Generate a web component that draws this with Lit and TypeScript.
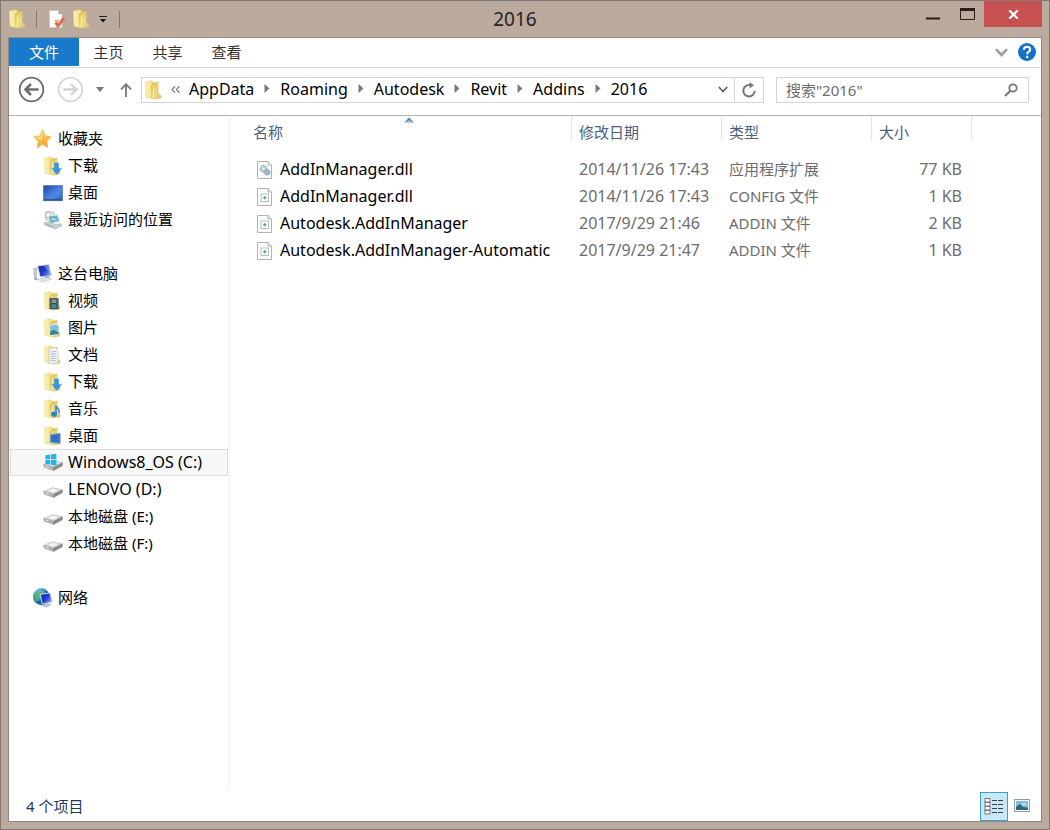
import { LitElement, html, svg, css } from "lit";
import { customElement, property } from "lit/decorators.js";
import { classMap } from "lit/directives/class-map.js";

interface Place {
  label: string;
  icon: string;
  root?: boolean;
  latin?: boolean;
  selected?: boolean;
}

interface FileRow {
  name: string;
  icon: string;
  date: string;
  type: string;
  size: string;
}

const places: Place[][] = [
  [
    { label: "收藏夹", icon: "star", root: true },
    { label: "下载", icon: "folder-down" },
    { label: "桌面", icon: "desktop" },
    { label: "最近访问的位置", icon: "recent" },
  ],
  [
    { label: "这台电脑", icon: "computer", root: true },
    { label: "视频", icon: "folder-video" },
    { label: "图片", icon: "folder-picture" },
    { label: "文档", icon: "folder-doc" },
    { label: "下载", icon: "folder-down" },
    { label: "音乐", icon: "folder-music" },
    { label: "桌面", icon: "folder-desktop" },
    { label: "Windows8_OS (C:)", icon: "disk-os", latin: true, selected: true },
    { label: "LENOVO (D:)", icon: "disk", latin: true },
    { label: "本地磁盘 (E:)", icon: "disk" },
    { label: "本地磁盘 (F:)", icon: "disk" },
  ],
  [{ label: "网络", icon: "network", root: true }],
];

const files: FileRow[] = [
  { name: "AddInManager.dll", icon: "file-dll", date: "2014/11/26 17:43", type: "应用程序扩展", size: "77 KB" },
  { name: "AddInManager.dll", icon: "file", date: "2014/11/26 17:43", type: "CONFIG 文件", size: "1 KB" },
  { name: "Autodesk.AddInManager", icon: "file", date: "2017/9/29 21:46", type: "ADDIN 文件", size: "2 KB" },
  { name: "Autodesk.AddInManager-Automatic", icon: "file", date: "2017/9/29 21:47", type: "ADDIN 文件", size: "1 KB" },
];

const crumbs = ["AppData", "Roaming", "Autodesk", "Revit", "Addins", "2016"];

/* Open folder standing on its edge; shared by every folder variant. */
const folder = svg`
  <path d="M1.4 2 7.4.8l2.8 1.6V19L2 17.4Z" fill="url(#fa)" stroke="#e6d07c" stroke-width=".5"/>
  <path d="M7.2 6 9.6 3l4.6-1v11.2l2.8 2.4v2.4L10 19.2 7.8 17Z" fill="url(#fb)" stroke="#d3b553" stroke-width=".4"/>
  <path d="M9.4 5.4v12.8" stroke="#fdf6c6" stroke-width="1"/>`;

/* Flat external drive in perspective. */
const drive = svg`
  <path d="M.6 11.4 9.4 7.6 19.4 9.8 10.6 14.2Z" fill="#dedede" stroke="#b4b4b4" stroke-width=".5"/>
  <path d="M.6 11.4 10.6 14.2v3.4L1.2 14.2Z" fill="#b4b4b4" stroke="#8f8f8f" stroke-width=".4"/>
  <path d="M10.6 14.2 19.4 9.8v3L10.6 17.6Z" fill="#868987" stroke="#7a7a7a" stroke-width=".4"/>
  <path d="M6 10.8l4-1.8 4.6 1-4.2 2Z" fill="#fafafa"/>
  <path d="M2.6 13.1l3 1" stroke="#f2f2f2" stroke-width=".8"/>`;

const page = svg`
  <path d="M2.5 1.5h10.6l3.4 3.4v13.6h-14Z" fill="#fdfdfd" stroke="#b0b3b1"/>
  <path d="M13 1.5V5h3.5" fill="#e9ecea" stroke="#b0b3b1"/>`;

const art: Record<string, unknown> = {
  folder,
  star: svg`<path d="M9.4.4 12 6.6l6.4 1.2-4.6 4.4 1 6.4-5.2-3.4L4.2 19l1-6.6L.8 7.4l6.2-.6Z" fill="url(#st)" stroke="#eda63a" stroke-width=".5"/>
    <path d="M9.2 3 7.8 7.8l-4 .6L9 11Z" fill="#fff0ae" opacity=".8"/>`,
  "folder-down": svg`${folder}<path d="M11.4 7h4.2v5.4h3L13.8 18.4 9 12.4h2.4Z" fill="#3397dc" stroke="#2b86c8" stroke-width=".4"/>`,
  "folder-video": svg`${folder}<rect x="6.4" y="7.2" width="9.2" height="11" fill="#37484c"/>
    <path d="M7.2 8.2v9.4M14.8 8.2v9.4" stroke="#a9bcbc" stroke-width=".8" stroke-dasharray="1 1"/>
    <rect x="8.6" y="8.4" width="4.8" height="3.6" fill="#7b9ea5"/><rect x="8.6" y="13.2" width="4.8" height="4" fill="#3f8f92"/>`,
  "folder-picture": svg`${folder}<path d="M6.8 7.6l6-1.4 3.2 1.8v8.4L6.8 17.4Z" fill="#7fbbe4" stroke="#eef6fb" stroke-width=".8"/>
    <path d="M7.2 17v-3.4l3.6-1.8 5 3v1.2Z" fill="#3d827d"/>`,
  "folder-doc": svg`${folder}<path d="M6 3.6 12.6 2.6l2.4 2.4v13L6 19Z" fill="#f2f5fa" stroke="#b4bcc8" stroke-width=".6"/>
    <path d="M7.6 7l5.6-.6M7.6 9.2l5.6-.5M7.6 11.4l5.6-.4M7.6 13.6l5.6-.3M7.6 15.8l5.6-.2" stroke="#9dabbd" stroke-width=".8"/>`,
  "folder-music": svg`${folder}<ellipse cx="11" cy="15.2" rx="2.8" ry="2.6" fill="#2b7fd0"/>
    <path d="M13 15.2V6.6c.4 2.4 4 3 3.2 7.6" fill="none" stroke="#3c8cd8" stroke-width="1.7"/>`,
  "folder-desktop": svg`${folder}<path d="M7.4 8.8l9.8-1.6v10.2L7.4 16.4Z" fill="#356fc2" stroke="#7ea6de" stroke-width=".8"/>`,
  desktop: svg`<rect x=".7" y="2.7" width="18.6" height="15" fill="url(#dk)" stroke="#3a68a8" stroke-width=".8"/>
    <path d="M1.2 16.8h17.6" stroke="#2b4878" stroke-width="1"/>`,
  recent: svg`<rect x="2.2" y="1.4" width="9.4" height="9" rx="2.4" fill="#dce2e4" stroke="#b0bcc1" stroke-width=".7"/>
    <circle cx="5.2" cy="5" r="2.8" fill="#f2f6f7" stroke="#a4b2b8" stroke-width=".8"/>
    <path d="M5 6.2 14.4 4.8l2.4 6.8-9.6 1.8Z" fill="#6cb1c6" stroke="#e2ebed" stroke-width="1"/>
    <path d="M8.6 9.4l3-.6 1.6 2" fill="none" stroke="#e4f4f8" stroke-width="1"/>
    <path d="M1 12.6 6 12l6 2.4 5.8-.6.8 2.2-6.4 3-10.4-4Z" fill="#ccd3d6" stroke="#9ba8ae" stroke-width=".6"/>
    <path d="M3 14l8 3" stroke="#8c9ba2" stroke-width=".7"/>`,
  computer: svg`<path d="M.8 4.4l3-.6v10.8L1.4 14Z" fill="#c6ced4" stroke="#93a0a9" stroke-width=".5"/>
    <path d="M4.6 2 15.6.6l3 11L7.2 13Z" fill="url(#scr)" stroke="#d2d8e2" stroke-width=".9"/>
    <path d="M11 1.6l4.2-.4 2.2 8.8Z" fill="#8fa8f0" opacity=".6"/>
    <path d="M11.6 12.6l4-.6.8 2-4.6 1Z" fill="#9aa4ae"/>
    <path d="M4.6 15.2 14.6 13.4l4.4 1.6-9.6 3.2Z" fill="#dfe4e8" stroke="#a9b2ba" stroke-width=".5"/>
    <path d="M2 13.4l2.4 1.2-.8 1.8-2.6-1Z" fill="#9ba5ac"/>`,
  "disk-os": svg`${drive}<path d="M2.4 2.2 7 1.6v4.6H2.4ZM7.8 1.5 13.4.8v5.4H7.8ZM2.4 7H7v4.6L2.4 11ZM7.8 7h5.6v5.4l-5.6-.7Z" fill="#1fb3ea"/>`,
  disk: drive,
  network: svg`<circle cx="8.4" cy="8.8" r="8.2" fill="url(#gl)" stroke="#4e90c0" stroke-width=".5"/>
    <path d="M3 4.6C6 2 9.4 3 9 5.6S5 8.6 5.6 11 4 14.6 2.2 12.4C.8 9.4 1 6.6 3 4.6Z" fill="#54b15b" opacity=".85"/>
    <path d="M7.4 6.4 17 5l2.2 9-10 1.8Z" fill="url(#scr)" stroke="#d3daee" stroke-width=".9"/>
    <path d="M12 15.4l3.4-.6.6 1.6 2.4.4-5.4 2.4-3.6-1.4 2.6-.8Z" fill="#c3cada" stroke="#96a0b8" stroke-width=".5"/>`,
  "file-dll": svg`${page}<circle cx="8.6" cy="8.8" r="3.4" fill="#b9d2df" stroke="#8fb0c2" stroke-width="1.2" stroke-dasharray="1.6 .8"/>
    <circle cx="12.2" cy="12.4" r="2.6" fill="#9dbdcb" stroke="#7ba1b4" stroke-width="1.2" stroke-dasharray="1.4 .7"/>
    <circle cx="8.6" cy="8.8" r="1" fill="#fff"/>`,
  file: svg`${page}<rect x="6" y="7" width="7.5" height="7.5" fill="#fff" stroke="#b0c1b6"/>
    <path d="M8 10.8h3.6M9.8 9v3.6" stroke="#4f9569" stroke-width="1.1"/>`,
};

const defs = svg`<defs>
  <linearGradient id="fa" x2="1"><stop stop-color="#fbf2b8"/><stop offset="1" stop-color="#f1da7c"/></linearGradient>
  <linearGradient id="fb" x2="1" y2="1"><stop stop-color="#d4b236"/><stop offset=".5" stop-color="#f0dc80"/><stop offset="1" stop-color="#d6c084"/></linearGradient>
  <linearGradient id="st" y2="1" x2=".3"><stop stop-color="#ffe272"/><stop offset="1" stop-color="#f5a52f"/></linearGradient>
  <linearGradient id="dk" x2="1" y2="1"><stop stop-color="#1d47a6"/><stop offset=".6" stop-color="#4f8ae4"/><stop offset="1" stop-color="#2c5fc0"/></linearGradient>
  <linearGradient id="scr" x2="1" y2=".6"><stop stop-color="#0c1fa0"/><stop offset=".6" stop-color="#2440cc"/><stop offset="1" stop-color="#7f9af0"/></linearGradient>
  <radialGradient id="gl" cx=".35" cy=".3"><stop stop-color="#c5ecf5"/><stop offset=".6" stop-color="#3c9fd2"/><stop offset="1" stop-color="#1b5f9f"/></radialGradient>
</defs>`;

@customElement("shell-icon")
class ShellIcon extends LitElement {
  static styles = css`
    :host { display: block; flex: none; width: 20px; height: 20px; }
    .art { display: block; width: 100%; height: 100%; }
  `;
  @property() name = "folder";
  render() {
    return html`<svg class="art" viewBox="0 0 20 20" aria-hidden="true">${defs}${art[this.name]}</svg>`;
  }
}

@customElement("app-root")
class AppRoot extends LitElement {
  static styles = css`
    :host {
      display: block;
      font-family: "Noto Sans", "Noto Sans CJK SC", sans-serif;
      font-size: 15px;
      line-height: 27px;
      color: #000;
    }
    * { box-sizing: border-box; }
    button, input { font: inherit; color: inherit; margin: 0; padding: 0; border: 0; background: none; }
    button { display: flex; align-items: center; justify-content: center; }
    a { color: inherit; text-decoration: none; }
    svg { display: block; flex: none; }

    .window {
      display: flex;
      flex-direction: column;
      min-height: 100vh;
      padding: 0 7px 7px;
      background: #bbaa9e;
      border: 1px solid #857a72;
    }
    .titlebar {
      display: grid;
      grid-template-columns: 1fr auto 1fr;
      height: 36px;
    }
    .quick { display: flex; align-items: center; }
    .quick .sep { width: 1px; height: 17px; background: #85786f; }
    .quick .first { margin: 0 10px 0 8px; }
    .quick .last { margin-left: 7px; }
    .quick .more { width: 18px; height: 20px; margin-left: 2px; }
    .quick .folder { margin-left: 5px; }
    .title {
      margin: 0;
      padding-right: 20px;
      font-size: 19px;
      line-height: 36px;
      font-weight: 400;
      color: #2b221d;
    }
    .controls { display: flex; justify-content: flex-end; align-items: flex-start; }
    .controls .ctl { width: 34px; height: 26px; }
    .controls .close { width: 58px; background: #c75050; }

    .frame {
      flex: 1;
      display: flex;
      flex-direction: column;
      background: #fff;
      border: 1px solid #96887d;
    }
    .ribbon {
      display: flex;
      align-items: stretch;
      height: 30px;
      border-bottom: 1px solid #dadbdc;
      color: #333;
    }
    .ribbon .tab { width: 59px; height: 29px; white-space: nowrap; }
    .ribbon .file { width: 70px; height: 28px; background: #1979ca; color: #fff; }
    .ribbon .tabs { display: flex; flex: 1; }
    .ribbon .fold { width: 24px; }
    .ribbon .help { width: 28px; height: 28px; }

    .bar { display: flex; align-items: center; height: 48px; padding: 0 12px 4px 9px; border-bottom: 1px solid #b3b3b3; }
    .bar .round { width: 27px; height: 27px; }
    .bar .fwd { margin-left: 12px; }
    .bar .hist { width: 22px; height: 27px; margin-left: 5px; }
    .bar .up { width: 20px; height: 27px; margin: 0 5px; }
    .address { flex: 1; display: flex; align-items: center; height: 26px; border: 1px solid #d5d5d5; }
    .address .lead { margin-left: 2px; }
    .address .prev { width: 25px; padding-right: 2px; }
    .address .crumbs { flex: 1; display: flex; align-items: center; margin: 0; padding: 0 0 2px; list-style: none; font-size: 16px; line-height: 24px; }
    .address .crumb { display: flex; align-items: center; }
    .address .arrow { width: 26px; }
    .address .drop { width: 22px; height: 24px; }
    .address .refresh { width: 29px; height: 24px; border-left: 1px solid #d5d5d5; }
    .search { display: flex; align-items: center; width: 253px; height: 26px; margin-left: 12px; border: 1px solid #d5d5d5; }
    .search .field { flex: 1; min-width: 0; height: 24px; padding-left: 9px; line-height: 24px; outline: none; }
    .search .field::placeholder { color: #6d6d6d; opacity: 1; }
    .search .go { width: 34px; height: 24px; }

    .body { flex: 1; display: flex; }
    .side { width: 221px; flex: none; padding: 9px 1px 0; border-right: 1px solid #f3f3f3; }
    .group { margin: 0 0 27px; padding: 0; list-style: none; }
    .place { display: flex; align-items: center; gap: 5px; height: 27px; padding-left: 32px; border: 1px solid transparent; line-height: 25px; white-space: nowrap; }
    .place.root { padding-left: 22px; }
    .place.latin { font-size: 16px; }
    .place.selected { background: #f7f7f7; border-color: #dedede; }

    .main { flex: 1; min-width: 0; padding-left: 16px; }
    .files { table-layout: fixed; width: 726px; border-collapse: separate; border-spacing: 0; }
    .files .c-name { width: 326px; }
    .files .c-mid { width: 150px; }
    .files .c-size { width: 100px; }
    .files .head { position: relative; height: 40px; padding: 0; text-align: left; vertical-align: top; font-weight: 400; color: #4c607a; }
    .files .label { display: block; height: 25px; padding: 3px 7px 0; border-right: 1px solid #e5e5e5; }
    .files .sort { position: absolute; top: 1px; left: 50%; margin-left: -5px; }
    .files .cell { height: 27px; padding: 0 10px 0 7px; color: #6d6d6d; white-space: nowrap; }
    .files .latin { font-size: 16px; }
    .files .num { text-align: right; }
    .files .name { display: flex; align-items: center; gap: 5px; padding-left: 9px; color: #000; }

    .status { display: flex; align-items: center; height: 30px; padding: 0 6px 0 17px; color: #1e395b; }
    .status .count { flex: 1; }
    .status .view { width: 27px; height: 29px; padding-bottom: 2px; }
    .status .on { width: 28px; padding-bottom: 0; background: #c9e9f8; border: 1px solid #3c9fcb; }
  `;

  private arrow() {
    return html`<svg width="6" height="9" viewBox="0 0 6 9" aria-hidden="true"><path d="M.5 0 5.5 4.5.5 9Z" fill="#7a7a7a"/></svg>`;
  }

  private place(p: Place) {
    return html`<li>
      <a href="#" class=${classMap({ place: true, root: !!p.root, latin: !!p.latin, selected: !!p.selected })}>
        <shell-icon name=${p.icon}></shell-icon><span>${p.label}</span>
      </a>
    </li>`;
  }

  render() {
    return html`
      <div class="window">
        <header class="titlebar">
          <div class="quick">
            <shell-icon name="folder"></shell-icon>
            <span class="sep first"></span>
            <button aria-label="属性">
              <svg width="20" height="20" viewBox="0 0 20 20">
                <path d="M2.5 1.5h9l3.5 3.5v13.5H2.5Z" fill="#fff" stroke="#c9c5c2" stroke-width=".7"/>
                <path d="M11.5 1.5V5H15Z" fill="#9a9da0"/>
                <path d="M8.6 13.4 11 17 17 9" fill="none" stroke="#e2694c" stroke-width="3"/>
                <path d="M8 12l3.6-.4M11 18l-2-.4" stroke="#f0a08a" stroke-width="1.8"/>
              </svg>
            </button>
            <button class="folder" aria-label="新建文件夹"><shell-icon name="folder"></shell-icon></button>
            <button class="more" aria-label="自定义快速访问工具栏">
              <svg width="8" height="7" viewBox="0 0 8 7"><path d="M0 .5h8" stroke="#222"/><path d="M1 3h6L4 6.4Z" fill="#111"/></svg>
            </button>
            <span class="sep last"></span>
          </div>
          <h1 class="title">2016</h1>
          <div class="controls">
            <button class="ctl" aria-label="最小化">
              <svg width="14" height="12" viewBox="0 0 14 12"><path d="M0 10.5h14" stroke="#2c1c14" stroke-width="2"/></svg>
            </button>
            <button class="ctl" aria-label="最大化">
              <svg width="15" height="12" viewBox="0 0 15 12"><path d="M.5 1v10.5h14V1" fill="none" stroke="#2c1c14"/><path d="M0 1.5h15" stroke="#2c1c14" stroke-width="3"/></svg>
            </button>
            <button class="ctl close" aria-label="关闭">
              <svg width="11" height="9" viewBox="0 0 11 9"><path d="M1.2.3 9.8 8.7M9.8.3 1.2 8.7" stroke="#fff" stroke-width="2.2"/></svg>
            </button>
          </div>
        </header>

        <div class="frame">
          <nav class="ribbon">
            <button class="tab file">文件</button>
            <div class="tabs">
              <button class="tab">主页</button>
              <button class="tab">共享</button>
              <button class="tab">查看</button>
            </div>
            <button class="fold" aria-label="展开功能区">
              <svg width="13" height="9" viewBox="0 0 13 9"><path d="M1 1.2 6.5 7 12 1.2" fill="none" stroke="#a0a0a0" stroke-width="2.6"/></svg>
            </button>
            <button class="help" aria-label="帮助">
              <svg width="18" height="18" viewBox="0 0 18 18">
                <circle cx="9" cy="9" r="9" fill="#1473c8"/>
                <path d="M6 6.8c0-4 6.2-3.8 6.2-.4 0 2.4-3 2.2-3 4.8" fill="none" stroke="#fff" stroke-width="2.1"/>
                <rect x="8" y="12.8" width="2.3" height="2.3" fill="#fff"/>
              </svg>
            </button>
          </nav>

          <div class="bar">
            <button class="round" aria-label="返回">
              <svg width="27" height="27" viewBox="0 0 27 27" fill="none" stroke="#6c6c6c"><circle cx="13.5" cy="13.5" r="11.8" stroke-width="1.8"/><path d="M20.5 13.5H8M13 8l-5.5 5.5L13 19" stroke-width="2.6"/></svg>
            </button>
            <button class="round fwd" aria-label="前进">
              <svg width="27" height="27" viewBox="0 0 27 27" fill="none" stroke="#d3d3d3"><circle cx="13.5" cy="13.5" r="11.8" stroke-width="1.6"/><path d="M6.5 13.5H19M14 8l5.5 5.5L14 19" stroke-width="2.4"/></svg>
            </button>
            <button class="hist" aria-label="最近浏览的位置">
              <svg width="8" height="5" viewBox="0 0 8 5"><path d="M0 0h8L4 5Z" fill="#777"/></svg>
            </button>
            <button class="up" aria-label="上移">
              <svg width="12" height="14" viewBox="0 0 12 14" fill="none" stroke="#777" stroke-width="1.8"><path d="M6 14V1.4M1 6.4l5-5.2 5 5.2"/></svg>
            </button>
            <div class="address">
              <shell-icon class="lead" name="folder"></shell-icon>
              <button class="prev" aria-label="上级文件夹">
                <svg width="9" height="7" viewBox="0 0 9 7" fill="none" stroke="#777" stroke-width="1.2"><path d="M4 .4 1 3.5l3 3.1M8.4.4l-3 3.1 3 3.1"/></svg>
              </button>
              <ol class="crumbs">
                ${crumbs.map(
                  (c, i) => html`<li class="crumb">
                    <a href="#">${c}</a>
                    ${i < crumbs.length - 1 ? html`<button class="arrow" aria-label="展开 ${c}">${this.arrow()}</button>` : ""}
                  </li>`
                )}
              </ol>
              <button class="drop" aria-label="历史地址">
                <svg width="10" height="7" viewBox="0 0 10 7"><path d="M.8 1 5 5.4 9.2 1" fill="none" stroke="#666" stroke-width="1.7"/></svg>
              </button>
              <button class="refresh" aria-label="刷新">
                <svg width="16" height="16" viewBox="0 0 16 16"><path d="M9.5 3H8a5.7 5.7 0 1 0 5.7 5.7" fill="none" stroke="#777" stroke-width="2"/><path d="M8.6 0 13 3.2 8.6 6.6Z" fill="#777"/></svg>
              </button>
            </div>
            <div class="search">
              <input class="field" type="text" aria-label="搜索" placeholder='搜索"2016"' />
              <button class="go" aria-label="开始搜索">
                <svg width="14" height="14" viewBox="0 0 14 14" fill="none" stroke="#777"><circle cx="9" cy="5" r="3.7" stroke-width="1.8"/><path d="M6.4 7.8 1 13" stroke-width="2.2"/></svg>
              </button>
            </div>
          </div>

          <div class="body">
            <nav class="side">
              ${places.map((g) => html`<ul class="group">${g.map((p) => this.place(p))}</ul>`)}
            </nav>
            <main class="main">
              <table class="files">
                <colgroup><col class="c-name" /><col class="c-mid" /><col class="c-mid" /><col class="c-size" /></colgroup>
                <thead>
                  <tr>
                    <th class="head">
                      <span class="label">名称</span>
                      <svg class="sort" width="10" height="6" viewBox="0 0 10 6"><path d="M0 6 5 .6 10 6 5 3.8Z" fill="#4a7db5"/><path d="M2 6 5 3l3 3Z" fill="#a9cbe8"/></svg>
                    </th>
                    <th class="head"><span class="label">修改日期</span></th>
                    <th class="head"><span class="label">类型</span></th>
                    <th class="head"><span class="label">大小</span></th>
                  </tr>
                </thead>
                <tbody>
                  ${files.map(
                    (f) => html`<tr>
                      <td class="cell latin name"><shell-icon name=${f.icon}></shell-icon>${f.name}</td>
                      <td class="cell latin">${f.date}</td>
                      <td class="cell">${f.type}</td>
                      <td class="cell latin num">${f.size}</td>
                    </tr>`
                  )}
                </tbody>
              </table>
            </main>
          </div>

          <footer class="status">
            <span class="count">4 个项目</span>
            <button class="view on" aria-label="详细信息">
              <svg width="20" height="17" viewBox="0 0 20 17" fill="none">
                ${[0, 4, 8, 12].map(
                  (y) => svg`<rect x="1" y=${y + 0.5} width="5" height="3.5" fill="#fff" stroke="#6f6a68" stroke-width=".9"/>
                    <path d=${`M8 ${y + 2.5}h5M14 ${y + 2.5}h5`} stroke="#3b3b45" stroke-width="1.2"/>`
                )}
              </svg>
            </button>
            <button class="view" aria-label="大图标">
              <svg width="16" height="13" viewBox="0 0 16 13">
                <rect x=".5" y=".5" width="15" height="12" fill="#fff" stroke="#8f9aa6"/>
                <rect x="2" y="2" width="12" height="9" fill="#7cc0ec"/>
                <path d="M2 8l4-3 3 3 5 .6V11H2Z" fill="#2c6a78"/><path d="M7 5.4c2-2 5-1 6 .4Z" fill="#e6f4fc"/>
              </svg>
            </button>
          </footer>
        </div>
      </div>
    `;
  }
}
